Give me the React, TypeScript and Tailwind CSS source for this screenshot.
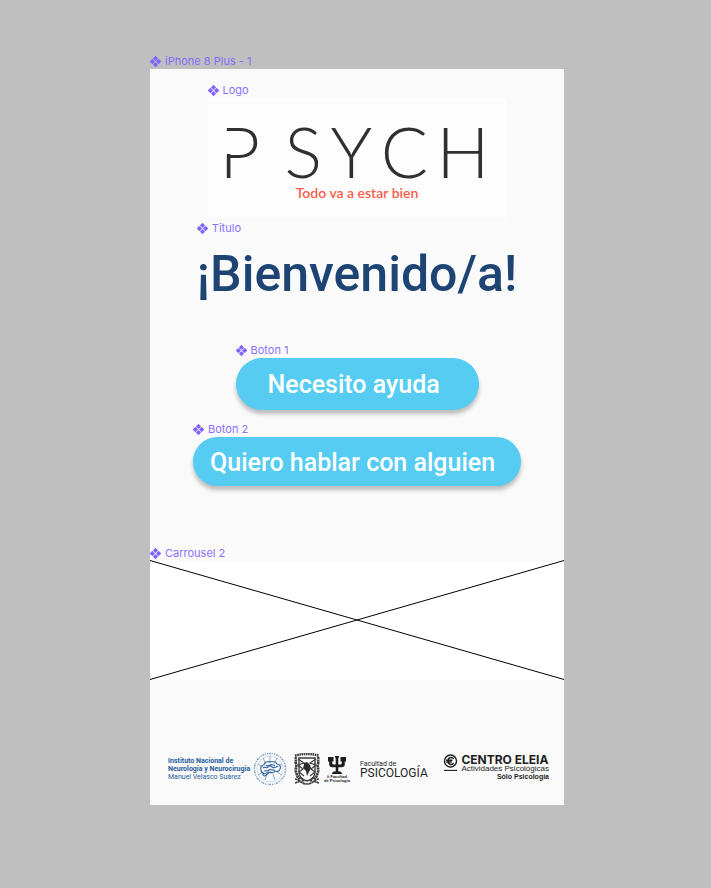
import type { ReactNode } from "react";

function ComponentMark() {
  return (
    <svg
      viewBox="0 0 11 11"
      className="size-[11px] shrink-0"
      fill="currentColor"
      stroke="currentColor"
      strokeWidth="1.2"
      strokeLinejoin="round"
      aria-hidden="true"
    >
      <path d="M5.5.6 7.3 2.4 5.5 4.2 3.7 2.4Z" />
      <path d="M5.5 6.8 7.3 8.6 5.5 10.4 3.7 8.6Z" />
      <path d="M2.4 3.7 4.2 5.5 2.4 7.3.6 5.5Z" />
      <path d="M8.6 3.7 10.4 5.5 8.6 7.3 6.8 5.5Z" />
    </svg>
  );
}

function Layer({ name, className = "", children }: { name: string; className?: string; children: ReactNode }) {
  return (
    <section className={className}>
      <div className="flex h-4 items-center gap-1 font-['Inter',sans-serif] text-[11px] leading-4 text-[#8064ff]">
        <ComponentMark />
        <span className="opacity-90">{name}</span>
      </div>
      {children}
    </section>
  );
}

function Logo() {
  return (
    <div className="flex h-[120px] w-[299px] flex-col items-center bg-[#fdfdfd] pt-[23px]">
      <div className="ml-3 flex w-[270px] justify-between self-start font-['Lato',sans-serif] text-[70px] leading-[60px] font-light text-[#303030]">
        <span className="relative pr-4">
          P
          <span className="absolute top-[10px] left-0 h-[23px] w-3 bg-[#fdfdfd]" />
        </span>
        <span>S</span>
        <span>Y</span>
        <span>C</span>
        <span>H</span>
      </div>
      <p className="mt-1 font-['Lato',sans-serif] text-sm leading-4 font-semibold text-[#fb5c48]">Todo va a estar bien</p>
    </div>
  );
}

function BrainSeal() {
  return (
    <svg viewBox="0 0 34 34" className="size-[34px] shrink-0" fill="none" stroke="#3a6ba5" aria-hidden="true">
      <circle cx="17" cy="17" r="15.6" strokeWidth="1.5" strokeDasharray="1.2 1 2 0.8 0.8 1.2" opacity="0.65" />
      <circle cx="17" cy="17" r="13" strokeWidth="0.5" opacity="0.4" />
      <path d="M17 4v7M10 6l3 6M24 6l-3 6M5 12l5 3M29 12l-5 3M5 23l5-3M29 23l-5-3M12 28l2-6M22 28l-2-6" strokeWidth="0.8" opacity="0.7" />
      <path d="M8 18c-1-3 1-5 3-5 0-3 4-4 6-3 3-1 6 0 7 2 3 0 4 3 3 5 0 2-3 3-5 2-1 2-4 2-5 1l-5 4c-2 0-3-2-1-3-2 0-3-1-3-3Z" strokeWidth="1.2" />
      <path d="M10 16c2-2 3 1 5-1s3-1 4 0 3 1 6-1M11 19c2-1 3 1 5-1s3 1 6 0M13 13c1 1 3 1 4 0s4 0 5 1M11 22l5-2" strokeWidth="1.2" />
    </svg>
  );
}

function Shield() {
  return (
    <svg viewBox="0 0 28 33" className="h-[33px] w-7 shrink-0" fill="none" stroke="#3c3c3c" aria-hidden="true">
      <path d="M2 2.5Q14-.5 26 2.5" strokeWidth="2.4" strokeDasharray="1.6 .6" />
      <path d="M6 5h16v14c0 5-4 8-8 9-4-1-8-4-8-9Z" strokeWidth="1.4" />
      <path d="M2 4c2 2 0 4 1 7s-1 5 0 8 1 5 4 7M26 4c-2 2 0 4-1 7s1 5 0 8-1 5-4 7" strokeWidth="2.6" strokeDasharray="2.2 .5" />
      <path d="m5 6 6 4-6 2 5 4-4 3 5 4M23 6l-6 4 6 2-5 4 4 3-5 4" strokeWidth="1.2" />
      <path d="M11 10c2-1 4-1 5 1l1 1 1 3-2 4-2 4-1-5-3-3 1-3Z" fill="#2c2c2c" stroke="none" />
      <path d="M2 26c4 0 6 5 12 5s8-5 12-5M7 24l4 5M21 24l-4 5M2 30l6-2M26 30l-6-2" strokeWidth="1.7" strokeDasharray="2.6 .4" />
    </svg>
  );
}

function Psi() {
  return (
    <svg viewBox="0 0 20 20" className="size-5" fill="#1c1c1c" aria-hidden="true">
      <path d="M1 2h5.5v4.5H5.2V8q0 1.5 1.8 1.5h1.7V3.5L7.8 1h4.4l-.9 2.5v6H13q1.8 0 1.8-1.5V6.5h-1.3V2H19v4.5h-1.2V9q0 3.2-3.2 3.2h-3.3v4.3h2.2l2 2.5H4.5l2-2.5h2.2v-4.3H5.4Q2.2 12.2 2.2 9V6.5H1Z" />
    </svg>
  );
}

function EleiaMark() {
  return (
    <svg viewBox="0 0 15 18" className="h-[18px] w-[15px] shrink-0" fill="none" stroke="#1d1d1d" aria-hidden="true">
      <circle cx="7.5" cy="7" r="6" strokeWidth="1.4" />
      <path d="M10.6 4.8C8.8 2.3 5 3.4 5 7s3.8 4.7 5.6 2.2M3.2 6.3h6.3M3.2 8.1h5.6" strokeWidth="1.5" />
      <path d="M1 16.4h13.2" strokeWidth="1.1" />
    </svg>
  );
}

function Partners() {
  return (
    <footer className="mb-[18px] flex h-9 items-center pr-[15px] pl-[18px] whitespace-nowrap">
      <div className="w-[85px] font-['Roboto',sans-serif] text-[7px] leading-2 text-[#255c9e]">
        <p className="font-bold">Instituto Nacional de</p>
        <p className="font-bold">Neurología y Neurocirugía</p>
        <p>Manuel Velasco Suárez</p>
      </div>
      <BrainSeal />
      <div className="ml-1.5 flex items-center gap-0.5">
        <Shield />
        <div className="flex w-7 flex-col items-center font-['Liberation_Sans',sans-serif] text-[4px] leading-1 font-bold text-[#222]">
          <Psi />
          <p>ii Facultad</p>
          <p>de Psicología</p>
        </div>
      </div>
      <div className="ml-[9px] font-['Roboto',sans-serif] text-[#262626]">
        <p className="text-[7px] leading-[7px]">Facultad de</p>
        <p className="text-xs leading-[10px]">PSICOLOGÍA</p>
      </div>
      <div className="mb-1 ml-auto flex gap-[3px] font-['Liberation_Sans',sans-serif] text-[#1d1d1d]">
        <EleiaMark />
        <div>
          <p className="font-['Inter',sans-serif] text-xs leading-[11px] font-bold">CENTRO ELEIA</p>
          <p className="text-[8px] leading-2">Actividades Psicológicas</p>
          <p className="text-right text-[7px] leading-2 font-bold">Sólo Psicología</p>
        </div>
      </div>
    </footer>
  );
}

const buttonStyle =
  "block rounded-full bg-[#56ccf2] pt-0.5 text-left font-['Roboto',sans-serif] text-[25px] font-medium text-white shadow-[0_4px_4px_rgba(0,0,0,0.25)] whitespace-nowrap";

export default function App() {
  return (
    <main className="min-h-screen bg-[#bfbfbf] pt-[53px] pb-20 pl-[3px]">
      <Layer name="iPhone 8 Plus - 1" className="mx-auto max-w-[414px]">
        <div className="flex min-h-[736px] flex-col items-center bg-[#fafafa] pt-[13px]">
          <Layer name="Logo">
            <Logo />
          </Layer>
          <Layer name="Titulo" className="mt-0.5">
            <h1 className="h-[106px] pt-1 font-['Roboto',sans-serif] text-[50px] leading-[68px] font-medium whitespace-nowrap text-[#1d4473]">
              ¡Bienvenido/a!
            </h1>
          </Layer>
          <Layer name="Boton 1">
            <button type="button" className={`${buttonStyle} h-[52px] w-[243px] pl-8`}>
              Necesito ayuda
            </button>
          </Layer>
          <Layer name="Boton 2" className="mt-[11px]">
            <button type="button" className={`${buttonStyle} h-[49px] w-[328px] pl-[17px]`}>
              Quiero hablar con alguien
            </button>
          </Layer>
          <Layer name="Carrousel 2" className="mt-[59px] w-full">
            <svg
              viewBox="0 0 414 119"
              preserveAspectRatio="none"
              className="block h-[119px] w-full overflow-visible bg-white"
              role="img"
              aria-label="Carrousel 2"
            >
              <path d="M0-.5 414 118.5M0 118.5 414-.5" stroke="#000" strokeWidth="1" />
            </svg>
          </Layer>
          <div className="mt-auto w-full">
            <Partners />
          </div>
        </div>
      </Layer>
    </main>
  );
}
